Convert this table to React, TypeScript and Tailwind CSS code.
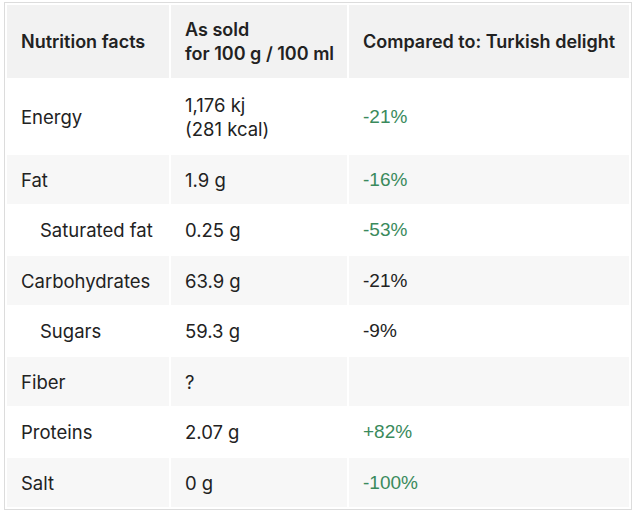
import React from "react";

type Row = {
  label: string;
  indent?: boolean;
  value: React.ReactNode;
  cmp?: string;
  green?: boolean;
  h: string;
};

const rows: Row[] = [
  { label: "Energy", value: (<><div>1,176 kj</div><div>(281 kcal)</div></>), cmp: "-21%", green: true, h: "h-[73px]" },
  { label: "Fat", value: "1.9 g", cmp: "-16%", green: true, h: "h-[49px]" },
  { label: "Saturated fat", indent: true, value: "0.25 g", cmp: "-53%", green: true, h: "h-[48px]" },
  { label: "Carbohydrates", value: "63.9 g", cmp: "-21%", h: "h-[49px]" },
  { label: "Sugars", indent: true, value: "59.3 g", cmp: "-9%", h: "h-[48px]" },
  { label: "Fiber", value: "?", cmp: "", h: "h-[49px]" },
  { label: "Proteins", value: "2.07 g", cmp: "+82%", green: true, h: "h-[48px]" },
  { label: "Salt", value: "0 g", cmp: "-100%", green: true, h: "h-[49px]" },
];

export default function App() {
  return (
    <div className="w-[636px] h-[516px] bg-white pt-[2px] pl-[4px]">
      <div className="w-[628px] border border-[#dcdcdc] bg-white">
        <table
          className="table-fixed border-separate border-spacing-[2px] w-full text-[18.5px] leading-[24px] text-[#222]"
          style={{ fontFamily: "Inter, 'Noto Sans', sans-serif" }}
        >
          <colgroup>
            <col className="w-[162px]" />
            <col className="w-[176px]" />
            <col />
          </colgroup>
          <thead>
            <tr className="h-[73px] text-[18px]">
              <th className="bg-[#f2f2f2] text-left align-middle font-semibold pl-[14px]">Nutrition facts</th>
              <th className="bg-[#f2f2f2] text-left align-middle font-semibold pl-[14px]">
                <div>As sold</div>
                <div>for 100 g / 100 ml</div>
              </th>
              <th className="bg-[#f2f2f2] text-left align-middle font-semibold pl-[14px]">Compared to: Turkish delight</th>
            </tr>
          </thead>
          <tbody>
            {rows.map((r, i) => {
              const bg = i % 2 === 1 ? "bg-[#f7f7f7]" : "bg-white";
              return (
                <tr key={r.label} className={r.h}>
                  <td className={`${bg} align-middle p-0 ${r.indent ? "pl-[33px]" : "pl-[14px]"}`}>{r.label}</td>
                  <td className={`${bg} align-middle p-0 pl-[14px]`}>{r.value}</td>
                  <td
                    className={`${bg} align-middle p-0 pl-[14px] text-[19px] ${r.green ? "text-[#3a8a5c]" : "text-[#222]"}`}
                    style={{ fontFamily: "'Liberation Sans', Arial, sans-serif" }}
                  >
                    {r.cmp}
                  </td>
                </tr>
              );
            })}
          </tbody>
        </table>
      </div>
    </div>
  );
}
